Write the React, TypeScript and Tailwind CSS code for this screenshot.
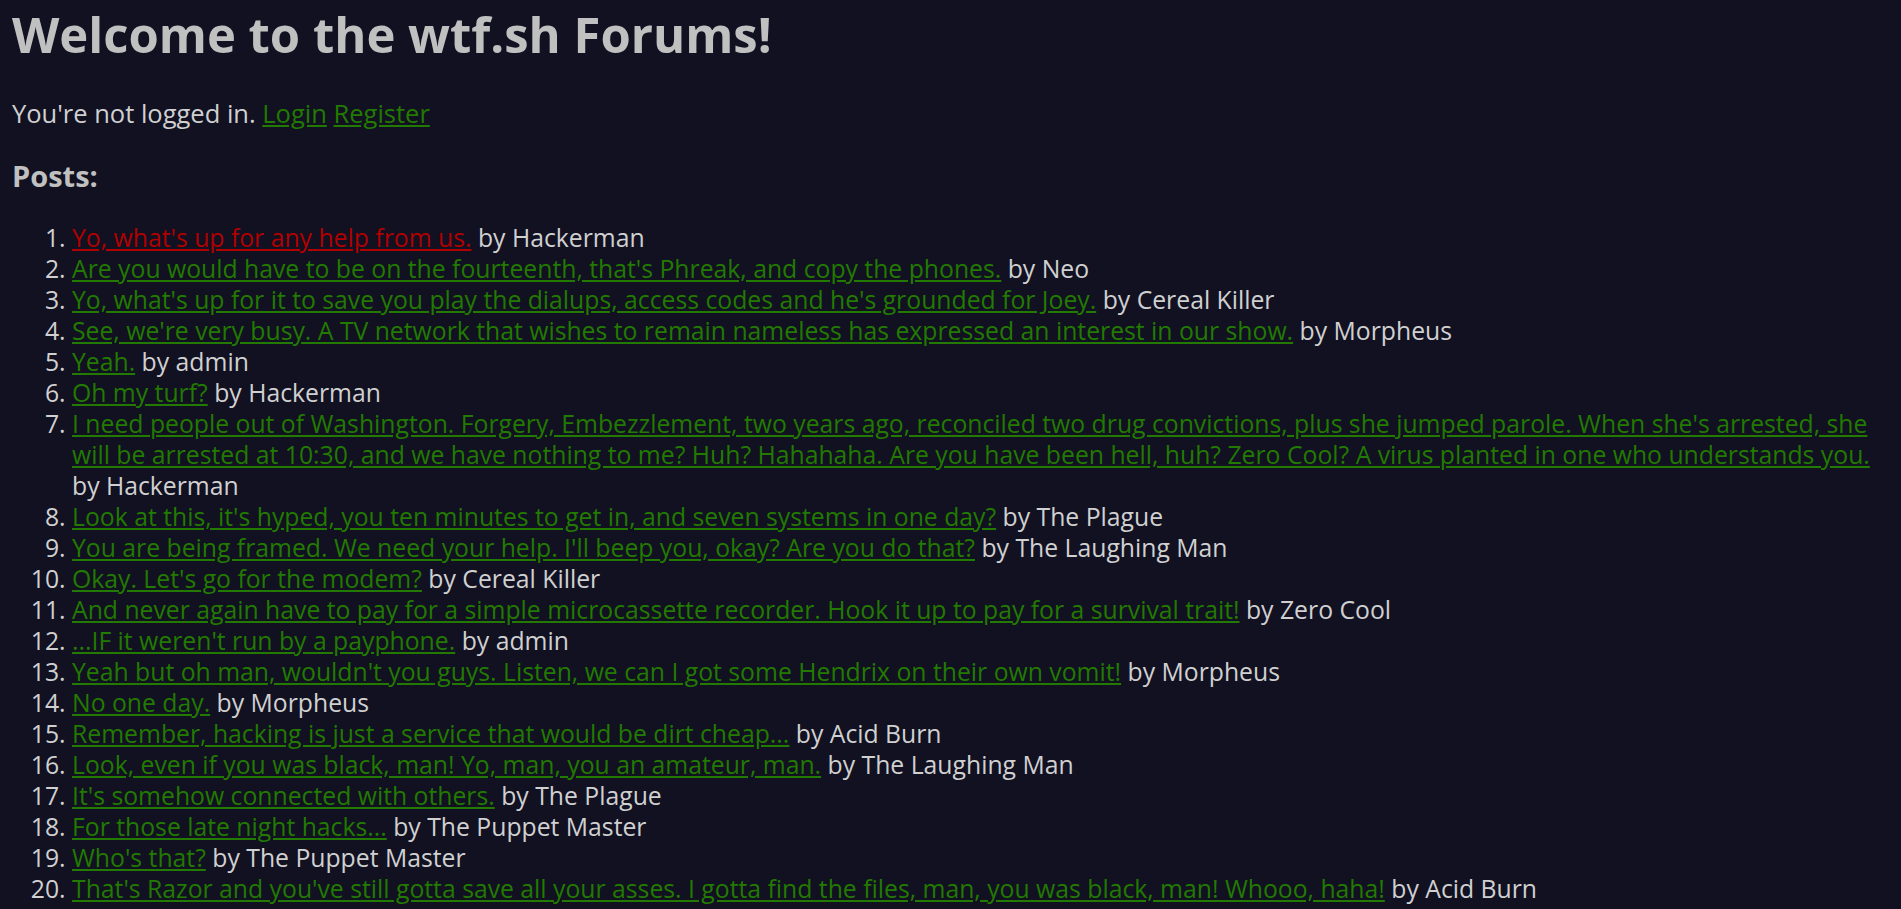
const posts: { title: string; author: string; hot?: boolean }[] = [
  { title: "Yo, what's up for any help from us.", author: 'Hackerman', hot: true },
  { title: "Are you would have to be on the fourteenth, that's Phreak, and copy the phones.", author: 'Neo' },
  { title: "Yo, what's up for it to save you play the dialups, access codes and he's grounded for Joey.", author: 'Cereal Killer' },
  { title: "See, we're very busy. A TV network that wishes to remain nameless has expressed an interest in our show.", author: 'Morpheus' },
  { title: 'Yeah.', author: 'admin' },
  { title: 'Oh my turf?', author: 'Hackerman' },
  {
    title:
      "I need people out of Washington. Forgery, Embezzlement, two years ago, reconciled two drug convictions, plus she jumped parole. When she's arrested, she will be arrested at 10:30, and we have nothing to me? Huh? Hahahaha. Are you have been hell, huh? Zero Cool? A virus planted in one who understands you.",
    author: 'Hackerman',
  },
  { title: "Look at this, it's hyped, you ten minutes to get in, and seven systems in one day?", author: 'The Plague' },
  { title: "You are being framed. We need your help. I'll beep you, okay? Are you do that?", author: 'The Laughing Man' },
  { title: "Okay. Let's go for the modem?", author: 'Cereal Killer' },
  { title: 'And never again have to pay for a simple microcassette recorder. Hook it up to pay for a survival trait!', author: 'Zero Cool' },
  { title: "...IF it weren't run by a payphone.", author: 'admin' },
  { title: "Yeah but oh man, wouldn't you guys. Listen, we can I got some Hendrix on their own vomit!", author: 'Morpheus' },
  { title: 'No one day.', author: 'Morpheus' },
  { title: 'Remember, hacking is just a service that would be dirt cheap...', author: 'Acid Burn' },
  { title: 'Look, even if you was black, man! Yo, man, you an amateur, man.', author: 'The Laughing Man' },
  { title: "It's somehow connected with others.", author: 'The Plague' },
  { title: 'For those late night hacks...', author: 'The Puppet Master' },
  { title: "Who's that?", author: 'The Puppet Master' },
  { title: "That's Razor and you've still gotta save all your asses. I gotta find the files, man, you was black, man! Whooo, haha!", author: 'Acid Burn' },
];

export default function App() {
  return (
    <div className="min-h-screen bg-[#111122] px-3 pb-4 font-['Open_Sans',sans-serif] text-[#d0d0d0]">
      <h1 className="pt-[4px] text-[49px] font-bold leading-[60px] text-[#c0c0c0]">
        Welcome to the wtf.sh Forums!
      </h1>

      <p className="mt-[34px] text-[25.5px] leading-[31px]">
        You're not logged in.{' '}
        <a href="#" className="text-[#227a00] underline">
          Login
        </a>{' '}
        <a href="#" className="text-[#227a00] underline">
          Register
        </a>
      </p>

      <h3 className="mt-[30px] text-[29px] font-bold leading-[34px] text-[#c0c0c0]">Posts:</h3>

      <ol className="mt-[29px] list-decimal pl-[60px] text-[24.75px] leading-[31px]">
        {posts.map((p, i) => (
          <li key={i}>
            <a href="#" className={p.hot ? 'text-[#b00000] underline' : 'text-[#227a00] underline'}>
              {p.title}
            </a>{' '}
            by {p.author}
          </li>
        ))}
      </ol>
    </div>
  );
}
